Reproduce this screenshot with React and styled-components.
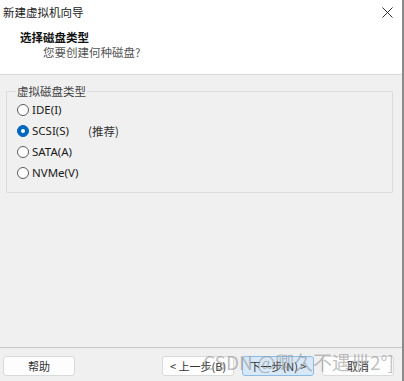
import React from 'react';
import styled, { createGlobalStyle } from 'styled-components';

const GlobalStyle = createGlobalStyle`
  html, body {
    margin: 0;
    padding: 0;
    background: #f0f0f0;
  }
  * {
    box-sizing: border-box;
  }
`;

const Window = styled.div`
  position: relative;
  display: flex;
  flex-direction: column;
  width: 404px;
  height: 381px;
  background: #f0f0f0;
  border-right: 2px solid #8a8a8a;
  font-family: "Noto Sans", "Noto Sans CJK SC", sans-serif;
  font-size: 12px;
  color: #1a1a1a;
  overflow: hidden;
`;

const TitleBar = styled.div`
  display: flex;
  align-items: center;
  justify-content: space-between;
  height: 26px;
  padding: 0 9px 2px 3px;
  background: #fff;
`;

const TitleText = styled.span`
  font-family: "Noto Sans CJK SC", sans-serif;
  font-size: 11.5px;
  color: #222;
`;

const Header = styled.div`
  display: flex;
  flex-direction: column;
  height: 49px;
  padding: 3px 0 0 20px;
  background: #fff;
  border-bottom: 1px solid #d9d9d9;
`;

const HeadTitle = styled.div`
  font-family: "Noto Sans CJK SC", sans-serif;
  font-weight: 700;
  font-size: 11.5px;
  line-height: 16px;
  color: #111;
`;

const HeadSub = styled.div`
  padding-left: 23px;
  font-family: "Noto Sans CJK SC", sans-serif;
  font-size: 11.5px;
  line-height: 15px;
  color: #555;
`;

const Body = styled.div`
  flex: 1;
  padding: 9px 9px 0 6px;
`;

const GroupBox = styled.fieldset`
  margin: 0;
  height: 109px;
  padding: 1px 0 0 10px;
  border: 1px solid #dcdcdc;
  border-radius: 1px;
`;

const Legend = styled.legend`
  margin-left: -1px;
  padding: 0 1px;
  font-family: "Noto Sans CJK SC", sans-serif;
  font-size: 11.5px;
  line-height: 14px;
  color: #444;
`;

const RadioRow = styled.label`
  display: flex;
  align-items: center;
  height: 21px;
  gap: 3px;
`;

const RadioDot = styled.span`
  position: relative;
  width: 12px;
  height: 12px;
  border-radius: 50%;
  border: 1px solid ${(p) => (p.$checked ? '#0067c0' : '#5c5c5c')};
  background: ${(p) => (p.$checked ? '#0067c0' : '#fff')};
  &::after {
    content: '';
    display: ${(p) => (p.$checked ? 'block' : 'none')};
    position: absolute;
    left: 3px;
    top: 3px;
    width: 4px;
    height: 4px;
    border-radius: 50%;
    background: #fff;
  }
`;

const RadioLabel = styled.span`
  width: 53px;
  font-family: "Noto Sans", sans-serif;
  font-size: 11.5px;
  color: #1a1a1a;
`;

const Note = styled.span`
  font-family: "Noto Sans CJK SC", sans-serif;
  font-size: 11.5px;
  color: #333;
`;

const Footer = styled.div`
  display: flex;
  align-items: flex-start;
  height: 34px;
  padding: 8px 8px 0 3px;
  border-top: 1px solid #c9c9c9;
`;

const Spacer = styled.div`
  flex: 1;
`;

const Button = styled.button`
  width: 72px;
  height: 20px;
  margin-left: ${(p) => p.$gap || 0}px;
  padding: 0;
  border: 1px solid ${(p) => (p.$primary ? '#8cbbe6' : '#dadada')};
  border-radius: 3px;
  background: ${(p) => (p.$primary ? '#d7e8f8' : '#fdfdfd')};
  font-family: "Noto Sans CJK SC", sans-serif;
  font-size: 11px;
  color: #333;
`;

const Watermark = styled.div`
  position: absolute;
  left: 203px;
  top: 352px;
  font-family: "Noto Sans CJK SC", sans-serif;
  font-size: 19px;
  line-height: 20px;
  color: rgba(140, 140, 140, 0.55);
  pointer-events: none;
  white-space: nowrap;
`;

const CloseIcon = () => (
  <svg width="11" height="11" viewBox="0 0 11 11">
    <path d="M0.5 0.5L10.5 10.5M10.5 0.5L0.5 10.5" stroke="#333" strokeWidth="1" />
  </svg>
);

const options = [
  { label: 'IDE(I)' },
  { label: 'SCSI(S)', checked: true, note: '(推荐)' },
  { label: 'SATA(A)' },
  { label: 'NVMe(V)' },
];

export default function App() {
  return (
    <Window>
      <GlobalStyle />
      <TitleBar>
        <TitleText>新建虚拟机向导</TitleText>
        <CloseIcon />
      </TitleBar>
      <Header>
        <HeadTitle>选择磁盘类型</HeadTitle>
        <HeadSub>您要创建何种磁盘?</HeadSub>
      </Header>
      <Body>
        <GroupBox>
          <Legend>虚拟磁盘类型</Legend>
          {options.map((o) => (
            <RadioRow key={o.label}>
              <RadioDot $checked={o.checked} />
              <RadioLabel>{o.label}</RadioLabel>
              {o.note ? <Note>{o.note}</Note> : null}
            </RadioRow>
          ))}
        </GroupBox>
      </Body>
      <Footer>
        <Button>帮助</Button>
        <Spacer />
        <Button>&lt; 上一步(B)</Button>
        <Button $primary $gap={8}>下一步(N) &gt;</Button>
        <Button $gap={8}>取消</Button>
      </Footer>
      <Watermark>CSDN @卿久不遇卌2°]</Watermark>
    </Window>
  );
}
